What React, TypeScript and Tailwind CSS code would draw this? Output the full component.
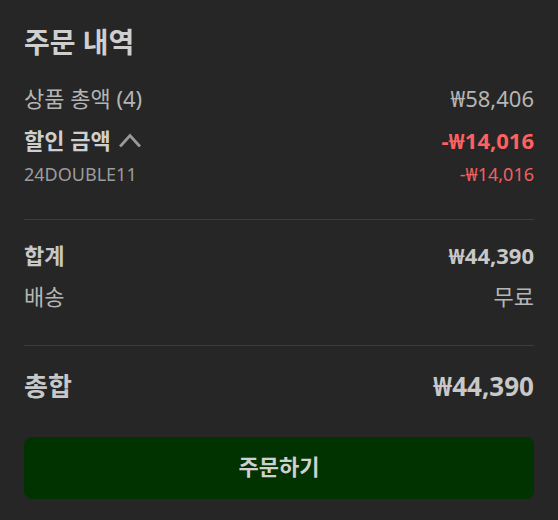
import React from "react";

export default function App() {
  return (
    <div
      className="w-[558px] h-[520px] bg-[#262626] px-6 pt-6 text-[#c4c4c4]"
      style={{ fontFamily: '"Noto Sans", "Noto Sans CJK KR", sans-serif' }}
    >
      <h2 className="text-[28px] leading-[36px] font-bold text-[#cfcfcf]">주문 내역</h2>

      <div className="mt-[24px] flex items-center justify-between text-[22px] leading-[28px] text-[#b5b5b5]">
        <span>상품 총액 (4)</span>
        <span>₩58,406</span>
      </div>

      <div className="mt-[14px] flex items-center justify-between text-[22px] leading-[28px]">
        <span className="flex items-center gap-[8px] font-bold text-[#cfcfcf]">
          할인 금액
          <svg width="22" height="14" viewBox="0 0 22 14" fill="none">
            <path d="M2 12.5 L11 2.5 L20 12.5" stroke="#9a9a9a" strokeWidth="2.8" strokeLinecap="square" strokeLinejoin="miter" />
          </svg>
        </span>
        <span className="font-bold text-[#ff6161]">-₩14,016</span>
      </div>

      <div className="mt-[8px] flex items-center justify-between text-[18px] leading-[24px]">
        <span className="text-[#9c9c9c]">24DOUBLE11</span>
        <span className="text-[#f06060]">-₩14,016</span>
      </div>

      <div className="mt-[33px] h-px bg-[#3d3d3d]" />

      <div className="mt-[21px] flex items-center justify-between text-[22px] leading-[28px] font-bold text-[#c8c8c8]">
        <span>합계</span>
        <span>₩44,390</span>
      </div>

      <div className="mt-[13px] flex items-center justify-between text-[22px] leading-[28px] text-[#b5b5b5]">
        <span>배송</span>
        <span>무료</span>
      </div>

      <div className="mt-[35px] h-px bg-[#3d3d3d]" />

      <div className="mt-[22px] flex items-center justify-between text-[26px] leading-[36px] font-bold text-[#c8c8c8]">
        <span>총합</span>
        <span>₩44,390</span>
      </div>

      <button className="mt-[33px] flex h-[62px] w-full items-center justify-center rounded-[8px] bg-[#003300] pb-[3px] text-[22px] font-bold text-[#d0d0d0]">
        주문하기
      </button>
    </div>
  );
}
